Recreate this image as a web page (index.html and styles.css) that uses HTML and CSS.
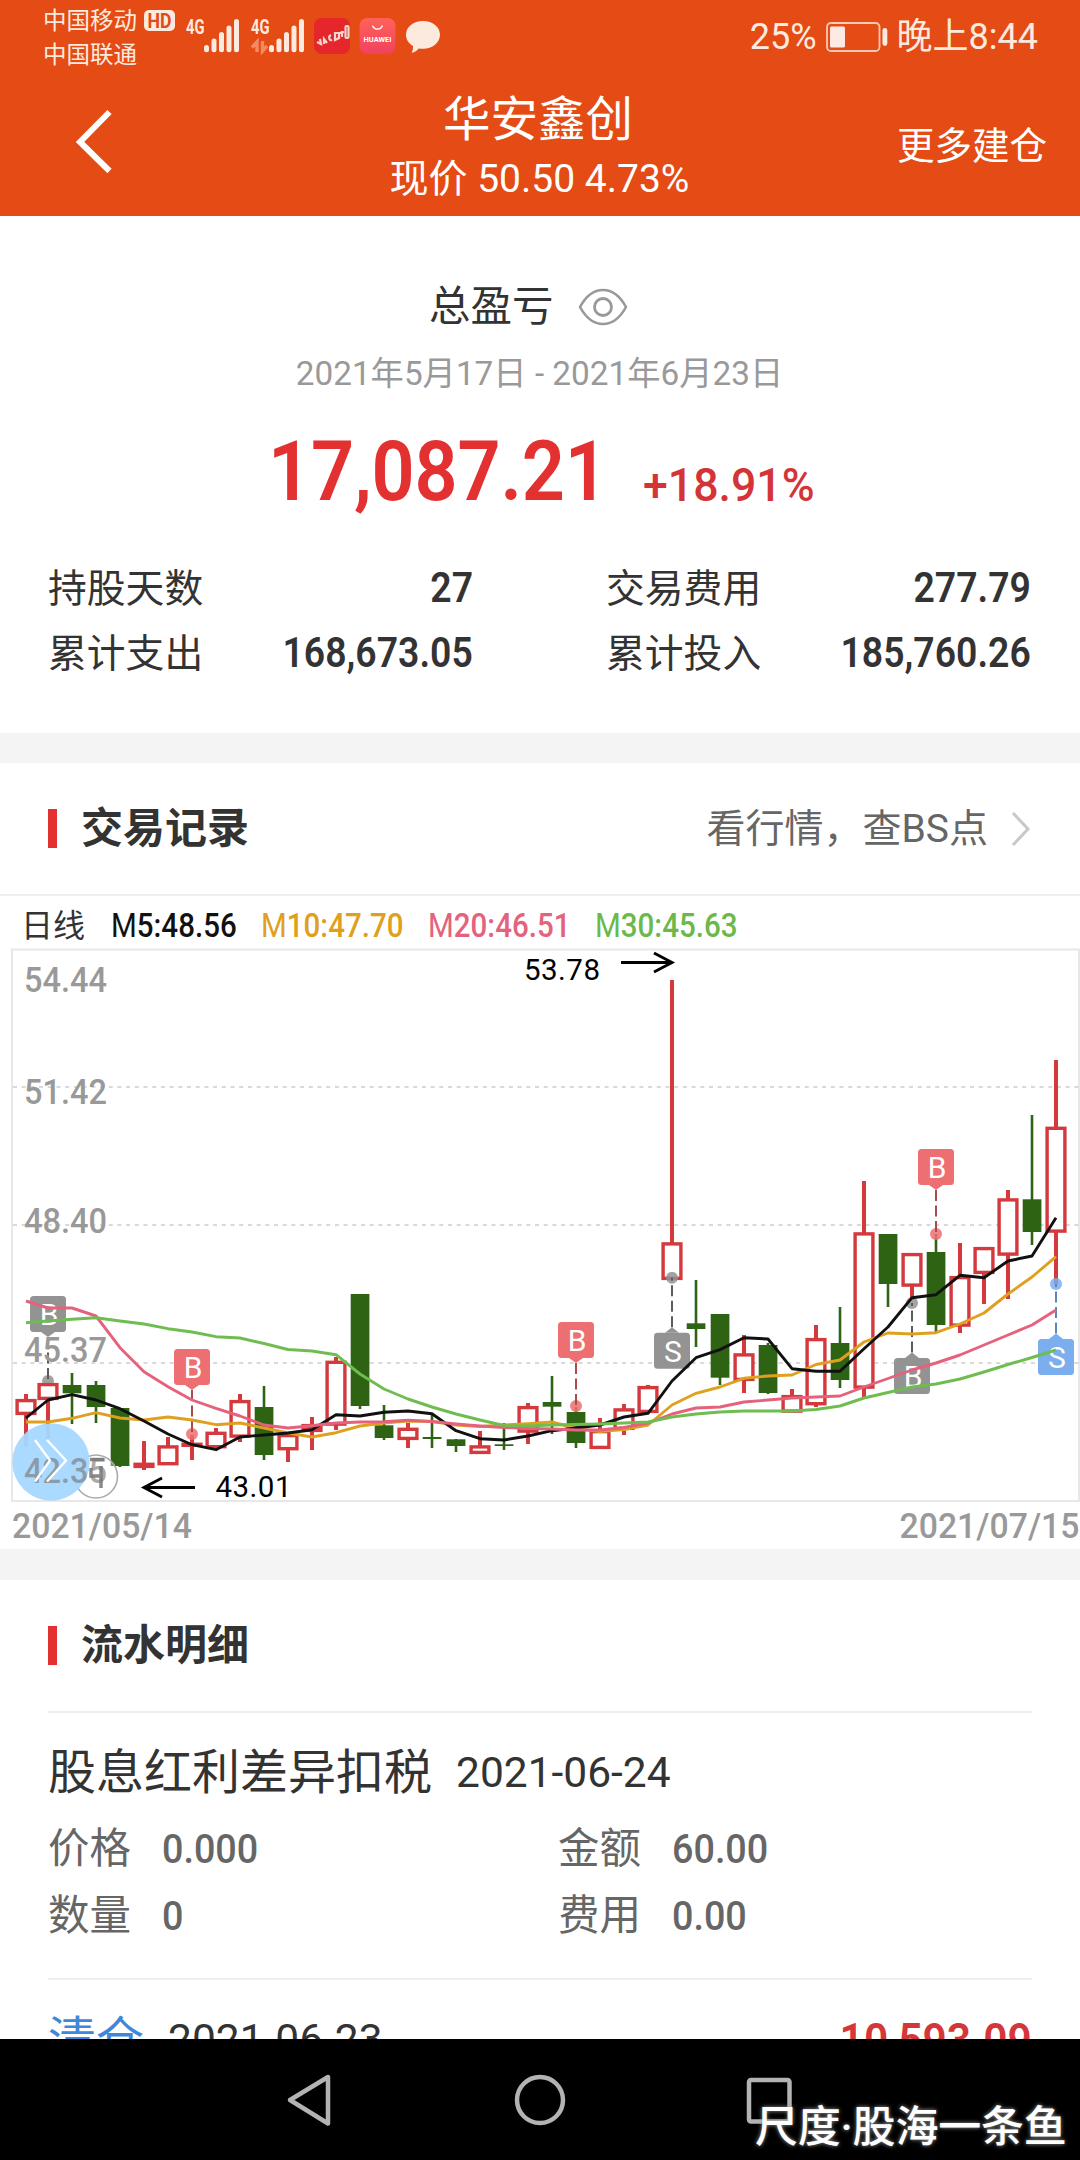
FILE: index.html
```html
<!DOCTYPE html>
<html lang="zh-CN">
<head>
<meta charset="utf-8">
<title>华安鑫创</title>
<link rel="stylesheet" href="styles.css">
</head>
<body>
<div class="screen">
  <header class="top">
    <div class="status">
      <div class="carriers"><span>中国移动</span><span>中国联通</span></div>
      <svg class="status-icons" viewBox="140 0 310 70" width="310" height="70">
        <rect x="144" y="10" width="31" height="21" rx="5" fill="#fdeadf"/>
        <text x="147.500" y="27.500" font-size="19.500" font-weight="700" fill="#e04c17" textLength="24" lengthAdjust="spacingAndGlyphs">HD</text>
        <g fill="#fdeadf">
          <text x="186" y="34" font-size="20.500" font-weight="700" textLength="18.500" lengthAdjust="spacingAndGlyphs">4G</text>
          <text x="251" y="34" font-size="20.500" font-weight="700" textLength="18.500" lengthAdjust="spacingAndGlyphs">4G</text>
        </g>
        <g stroke="#fdeadf" stroke-width="5" stroke-linecap="round">
          <path d="M206.500 47.500v2.200M214 41v8.700M221.500 34.500v15.200M229 28v21.700M236.500 21.500v28.200"/>
          <path d="M271.500 47.500v2.200M279 41v8.700M286.500 34.500v15.200M294 28v21.700M301.500 21.500v28.200"/>
        </g>
        <path d="M257 52V42l-5 5.500M262.500 41v10l4.500-5" fill="none" stroke="#f58a62" stroke-width="3.400"/>
        <rect x="314" y="18" width="36" height="36" rx="8" fill="#e5262b"/>
        <g fill="none" stroke="#f6d5cf" stroke-width="2.200">
          <path d="M317 42l4 2-1-5M324 44v-5l3 4M331 35c-3 1-2 6 1 5M335 33v7l4-2v-5zM342 31v6M340 33l4-1"/>
          <rect x="345.500" y="26" width="3" height="12" rx="1"/>
        </g>
        <defs><linearGradient id="hw" x1="0" y1="0" x2="0" y2="1"><stop offset="0" stop-color="#ff6259"/><stop offset="1" stop-color="#f1415f"/></linearGradient></defs>
        <rect x="359.500" y="18" width="36" height="36" rx="8" fill="url(#hw)"/>
        <path d="M372.500 25.500a5.300 5.300 0 0 0 10 0" fill="none" stroke="#fff" stroke-width="1.300"/>
        <text x="363.500" y="41.500" font-size="6.800" font-weight="700" fill="#fff" textLength="28" lengthAdjust="spacingAndGlyphs">HUAWEI</text>
        <path d="M423 21c9.600 0 17 6 17 13.800s-7.400 14-17 14c-1.500 0-3-.1-4.300-.4-1.700 2-4 3.800-7 4.300 1-2 1.500-4.200 1.300-6.600-4.400-2.600-7-6.700-7-11.300C406 27 413.400 21 423 21z" fill="#fdeadf"/>
      </svg>
      <div class="battery">
        <span>25%</span>
        <svg viewBox="0 0 62 30" width="62" height="30"><rect x="1" y="1" width="52.500" height="28" rx="4" fill="none" stroke="#fbc9b2" stroke-width="1.800"/><rect x="4" y="4.500" width="15" height="21" rx="1.500" fill="#fdeae4"/><rect x="56.500" y="6" width="4.800" height="18" rx="2.400" fill="#fdeae4"/></svg>
        <span>晚上8:44</span>
      </div>
    </div>
    <div class="navbar">
      <svg class="back" viewBox="0 0 40 66" width="40" height="66"><path d="M34.500 3L5 33l29.500 29" fill="none" stroke="#fff" stroke-width="6"/></svg>
      <div class="heading"><h1>华安鑫创</h1><p>现价 50.50 4.73%</p></div>
      <a class="more">更多建仓</a>
    </div>
  </header>

  <section class="summary">
    <div class="sum-title"><span>总盈亏</span>
      <svg viewBox="0 0 50 38" width="50" height="38"><path d="M2 19C8 8 16 2 25 2s17 6 23 17c-6 11-14 17-23 17S8 30 2 19z" fill="none" stroke="#999" stroke-width="2.600" stroke-linejoin="round"/><circle cx="25" cy="19" r="8.500" fill="none" stroke="#999" stroke-width="2.800"/></svg>
    </div>
    <div class="period">2021年5月17日 - 2021年6月23日</div>
    <div class="profit"><span class="amount">17,087.21</span><span class="rate">+18.91%</span></div>
    <div class="stats">
      <div class="stat"><span>持股天数</span><b>27</b></div>
      <div class="stat"><span>交易费用</span><b>277.79</b></div>
      <div class="stat"><span>累计支出</span><b>168,673.05</b></div>
      <div class="stat"><span>累计投入</span><b>185,760.26</b></div>
    </div>
  </section>

  <section class="trades">
    <div class="section-head">
      <h2><span>交易记录</span></h2>
      <a><span>看行情，查BS点</span><svg viewBox="0 0 20 36" width="20" height="36"><path d="M2 2l15 16L2 34" fill="none" stroke="#c8c8c8" stroke-width="3"/></svg></a>
    </div>
    <div class="legend">
      <span class="day">日线</span>
      <span class="ma m5"><i>M</i>5:48.56</span>
      <span class="ma m10"><i>M</i>10:47.70</span>
      <span class="ma m20"><i>M</i>20:46.51</span>
      <span class="ma m30"><i>M</i>30:45.63</span>
    </div>
    <svg id="chart" class="chart" viewBox="0 948 1080 555" width="1080" height="555"></svg>
    <div class="dates"><span>2021/05/14</span><span>2021/07/15</span></div>
  </section>

  <section class="flow">
    <div class="section-head"><h2><span>流水明细</span></h2></div>
    <article class="entry">
      <div class="entry-title"><span>股息红利差异扣税</span><time>2021-06-24</time></div>
      <div class="fields">
        <div><span>价格</span><b>0.000</b></div>
        <div><span>金额</span><b>60.00</b></div>
        <div><span>数量</span><b>0</b></div>
        <div><span>费用</span><b>0.00</b></div>
      </div>
    </article>
    <article class="entry">
      <div class="entry-title"><span class="clear">清仓</span><time>2021-06-23</time><b class="gain">10,593.09</b></div>
    </article>
  </section>

  <footer class="keys">
    <svg viewBox="0 0 1080 121" width="1080" height="121"><g fill="none" stroke="#b3b3b3" stroke-width="4.500" stroke-linejoin="round"><path d="M328 38v46.500L290 61z"/><circle cx="540" cy="61" r="23"/><rect x="749" y="41" width="40.500" height="41.500" rx="2"/></g></svg>
    <span class="watermark">尺度·股海一条鱼</span>
  </footer>
</div>
<script src="chart.js"></script>
</body>
</html>
```
FILE: styles.css
```css
* { box-sizing: border-box; }
body {
  margin: 0;
  background: #fff;
  color: #333;
  font-family: Roboto, "Noto Sans CJK SC", sans-serif;
}
h1, h2, p { margin: 0; font-weight: 400; }
i { font-style: normal; }
svg { display: block; flex: none; }
.screen {
  width: 1080px;
  height: 2160px;
  display: flex;
  flex-direction: column;
  overflow: hidden;
  white-space: nowrap;
}

.top { flex: none; height: 216px; background: #e44b15; color: #fff; }
.status { height: 74px; display: flex; align-items: flex-start; color: #fdeadf; padding-left: 43px; }
.carriers { width: 97px; padding-top: 4px; display: flex; flex-direction: column; font-size: 23.5px; line-height: 34px; }
.battery { margin-left: auto; padding: 16px 42px 0 0; display: flex; align-items: center; gap: 9px; font-size: 36px; line-height: 42px; }
.navbar { height: 142px; display: grid; grid-template-columns: 300px 480px 300px; }
.back { margin: 35px 0 0 75px; }
.heading { text-align: center; padding-top: 15px; }
.heading h1 { font-size: 47.5px; line-height: 62px; padding-right: 4px; }
.heading p { font-size: 39px; line-height: 56px; padding-right: 1px; }
.more { font-size: 37.5px; line-height: 144px; padding-left: 117px; }

.summary { flex: none; height: 517px; padding-top: 64px; background: #fff; }
.sum-title { height: 54px; display: flex; align-items: center; padding-left: 429px; gap: 24px; font-size: 41.5px; line-height: 50px; }
.sum-title span { margin-top: -1px; }
.period { height: 76px; line-height: 79px; font-size: 33.3px; color: #999; text-align: center; padding-right: 1px; }
.profit { height: 122px; display: flex; color: #e33031; font-weight: 600; padding-left: 268px; }
.amount { width: 375px; font-size: 83px; line-height: 124px; letter-spacing: -.2px; transform: scaleX(.91); transform-origin: left; }
.rate { font-size: 47px; line-height: 149px; font-weight: 500; color: #d43437; transform: scaleX(.95); transform-origin: left; }
.stats { display: grid; grid-template-columns: 425px 425px; column-gap: 133px; padding-left: 48px; margin-top: 24px; }
.stat { height: 65px; display: flex; justify-content: space-between; align-items: center; font-size: 38.8px; line-height: 50px; }
.stat b { font-size: 42px; font-weight: 600; transform: scaleX(.89); transform-origin: right; margin-top: -1px; }

.trades { flex: none; height: 816px; border-top: 30px solid #f4f4f4; }
.section-head { height: 133px; display: flex; align-items: center; justify-content: space-between; padding: 0 49px 0 48px; border-bottom: 2px solid #eee; line-height: 50px; }
.section-head h2 { display: flex; align-items: center; gap: 24px; font-size: 42px; font-weight: 700; }
.section-head h2::before { content: ""; width: 9px; height: 39px; background: #e33031; }
.section-head a { display: flex; align-items: center; gap: 23px; font-size: 39px; color: #666; }
.legend { height: 52px; display: grid; grid-template-columns: 90px 150px 167px 167px auto; padding: 5px 0 0 21px; line-height: 50px; align-items: center; }
.legend span { line-height: 50px; }
.day { font-size: 32px; }
.ma { font-size: 33px; font-weight: 500; transform: scaleX(.895); transform-origin: left; }
.ma i { font-weight: 400; }
.m5 { color: #111; }
.m10 { color: #dfa020; }
.m20 { color: #e5627c; }
.m30 { color: #6ab94a; }
.dates { height: 46px; display: flex; justify-content: space-between; font-size: 35px; line-height: 48px; color: #999; padding: 0 1px 0 12px; }
.dates span { transform: scaleX(.965); transform-origin: left; font-weight: 500; }
.dates span:last-child { transform-origin: right; }

.flow { flex: none; height: 490px; border-top: 31px solid #f4f4f4; overflow: hidden; }
.flow .section-head { border: 0; height: 131px; }
.entry { height: 267px; margin: 0 48px; border-top: 2px solid #eee; padding-top: 30px; }
.entry-title { display: flex; align-items: center; height: 60px; font-size: 48px; line-height: 56px; }
.entry-title time { font-size: 42.5px; margin-left: 24px; }
.entry-title .clear { color: #3f87d8; font-size: 48px; }
.gain { margin-left: auto; font-size: 46px; font-weight: 600; color: #d4363a; transform: scaleX(.925); transform-origin: right; }
.fields { display: grid; grid-template-columns: 510px auto; padding-top: 12px; color: #666; font-size: 41.5px; line-height: 50px; }
.fields div { display: flex; align-items: center; height: 67px; gap: 31px; }
.fields b { font-size: 41px; font-weight: 500; transform: scaleX(.92); transform-origin: left; }

.keys { flex: 1; position: relative; background: #000; }
.watermark { position: absolute; left: 755px; top: 58px; font-size: 43px; line-height: 60px; font-weight: 500; color: #fff; text-shadow: 0 0 4px #999; letter-spacing: -.2px; }
```
FILE: chart.js
```js
// [colour, body top, body bottom, wick top, wick bottom], one per trading day
const days = [
  ['r',1399,1415,1394,1447],['r',1383,1400,1383,1439],['g',1385,1393.3,1373,1424],['g',1385,1407,1381,1423],
  ['g',1408,1466,1408,1467],['r',1462.7,1468,1441,1470],['r',1445.3,1465.3,1437,1465],['r',1442.7,1446.7,1435,1460],
  ['r',1431.7,1448.3,1428,1448],['r',1400,1437.7,1394,1442],['g',1407,1455,1386,1460],['r',1434,1450.3,1434,1462],
  ['r',1424,1432,1417,1450],['r',1360.7,1425.7,1357,1430],['g',1294,1406,1294,1409],['g',1425.3,1438,1405,1440],
  ['r',1427.7,1440,1423,1448],['g',1437,1439,1415,1448],['g',1439.3,1446,1439,1452],['r',1445.3,1454,1431,1454],
  ['g',1444.3,1446,1423,1450],['r',1406,1432.7,1403,1444],['g',1402,1406.7,1376,1434],['g',1412,1443,1407,1448],
  ['r',1430,1449,1418,1449],['r',1408.3,1430,1404,1435],['r',1386,1413,1385,1413],['r',1242.3,1280,980,1280],
  ['g',1323.3,1329,1280,1347],['g',1314,1377.7,1314,1385],['r',1353.3,1381,1335,1393],['g',1345,1393,1343,1394],
  ['r',1395,1412.7,1389,1412],['r',1338,1405.3,1325,1407],['g',1343,1380,1307,1388],['r',1232.3,1388.7,1181,1397],
  ['g',1234,1284,1234,1307],['r',1253,1286.7,1253,1300],['g',1252,1325,1234,1332],['r',1276,1326.7,1243,1333],
  ['r',1247,1274,1247,1304],['r',1198.3,1255.7,1190,1299],['g',1199.3,1232,1115,1245],['r',1126.7,1232.7,1060,1284]
];
const averages = {
  '#111': [1418,1400,1394.7,1400,1408.7,1421,1434,1444.7,1449.7,1437,1435,1433,1429.7,1414.7,1416,1412.3,1411,1413.7,1430.7,1438.7,1440,1436,1430.7,1428,1425,1417,1413.3,1381,1357.7,1349.6,1337.7,1339,1368.7,1371.3,1371.3,1348.7,1327,1297.7,1294.7,1275.3,1277.7,1261,1256,1217.7],
  '#dfa020': [1422,1422,1418.3,1412.7,1418,1420,1417,1420,1424.7,1423,1428,1433,1437,1432.7,1426,1423,1421,1421.5,1425,1426.5,1425,1423.7,1422,1428.5,1431.5,1429.5,1425,1405,1393.3,1387,1378.3,1376,1375,1364.5,1360,1342,1333,1334,1332.7,1324,1313,1294,1277,1256.7],
  '#e5627c': [1301,1308,1308,1316,1347.7,1371.7,1386.7,1400,1408.3,1416,1425,1428,1425.7,1423,1422,1421.7,1420.3,1421.5,1424,1426,1427.5,1428.5,1429,1430,1430,1427.5,1423,1414,1408,1407,1402,1400,1398,1397,1396,1387,1378.5,1370,1363,1355,1345,1335,1325,1310],
  '#6fbd50': [1322.7,1321,1319.3,1317.7,1321,1324,1328.7,1332,1336.7,1338,1343.5,1349.5,1351,1354.7,1374,1389,1399,1407,1414,1420,1425.5,1426,1425,1424.5,1424,1423,1422,1417,1414,1412,1411,1411,1411,1409.5,1406,1398,1392.5,1387,1384,1379,1372,1364.5,1357.5,1350]
};
// [letter, colour, x, box top, dot y]
const marks = [
  ['B','#939393',48,1296,1381],['B','#ee6f71',192,1349,1434],['B','#ee6f71',576,1322,1406],
  ['S','#939393',672,1332.7,1277.7],['B','#ee6f71',936,1149,1234],['B','#939393',912,1358,1303],['S','#7aaeee',1056,1339,1284]
];
const xAt = i => i === 0 ? 26 : 24 + 24 * i;
const out = [];
out.push('<path d="M12 949.500H1079V1501H12z" fill="none" stroke="#e8e8e8" stroke-width="2"/>');
[1087, 1225, 1363].forEach(y => out.push(`<path d="M13 ${y}H1079" stroke="#d9d9d9" stroke-width="1.800" stroke-dasharray="4 4.700"/>`));

const dot = m => `<circle cx="${m[2]}" cy="${m[4]}" r="6" fill="${m[1]}" opacity=".85"/>`;
out.push(dot(marks[0]));
days.forEach(([c, t, b, h, l], i) => {
  const x = xAt(i);
  if (c === 'g') {
    out.push(`<path d="M${x} ${h}V${l}" stroke="#2f6314" stroke-width="2.600"/><rect x="${x - 9.3}" y="${t}" width="18.700" height="${b - t}" fill="#2f6314"/>`);
  } else {
    const inner = b - t > 8.2 ? '#fff' : '#d4393d';
    out.push(`<path d="M${x} ${h}V${l}" stroke="#d4393d" stroke-width="4"/><rect x="${x - 8.9}" y="${t + 1.6}" width="17.800" height="${Math.max(b - t - 3.2, 1)}" fill="${inner}" stroke="#d4393d" stroke-width="3.400"/>`);
  }
});
marks.forEach((m, i) => {
  const [ch, col, x, top, dy] = m;
  const above = top < dy;
  const tip = above ? top + 41 : top - 5.5;
  const base = above ? top + 36 : top;
  const dash = col === '#ee6f71' ? '#a94a4d' : col === '#7aaeee' ? '#5b86bb' : '#5c5c5c';
  if (i) out.push(dot(m));
  out.push(`<path d="M${x} ${tip}V${dy}" stroke="${dash}" stroke-width="2" stroke-dasharray="11 4.500"/>`);
  out.push(`<rect x="${x - 18}" y="${top}" width="36" height="36" rx="3.500" fill="${col}"/><path d="M${x - 7} ${base}L${x} ${tip}L${x + 7} ${base}z" fill="${col}"/>`);
  out.push(`<text x="${x + 1}" y="${top + 29}" font-size="30" fill="#fff" text-anchor="middle">${ch}</text>`);
});
[['54.44',992],['51.42',1104],['48.40',1233],['45.37',1361.7]].forEach(([s, y]) =>
  out.push(`<text x="24" y="${y}" font-size="34.500" font-weight="500" fill="#999" textLength="83" lengthAdjust="spacingAndGlyphs">${s}</text>`));
['#dfa020', '#111', '#e5627c', '#6fbd50'].forEach(c =>
  out.push(`<polyline fill="none" stroke="${c}" stroke-width="2.900" stroke-linejoin="round" points="${averages[c].map((y, i) => xAt(i) + ',' + y).join(' ')}"/>`));

out.push('<g font-size="29.500" fill="#000"><text x="524" y="979.500" textLength="76">53.78</text><text x="215.500" y="1496.700" textLength="76">43.01</text></g>');
out.push('<path d="M621 962.500H671M654 953l18 9.500-18 9.500M195 1487.500H145M162 1478l-18 9.500 18 9.500" fill="none" stroke="#000" stroke-width="2.900"/>');
// floating expand and info buttons
out.push('<circle cx="96" cy="1476.500" r="21.500" fill="#fff" fill-opacity=".35" stroke="#aaa" stroke-width="1.600"/><path d="M90 1459.500h14M101 1466v22M91 1468v8h10" fill="none" stroke="#8a8a8a" stroke-width="3.500"/>');
out.push('<circle cx="51" cy="1462" r="38.700" fill="#a5d8ff" fill-opacity=".95"/>');
out.push('<text x="24" y="1483" font-size="34.500" font-weight="500" fill="#777" fill-opacity=".65" textLength="83" lengthAdjust="spacingAndGlyphs">42.35</text>');
out.push('<path d="M35 1440l15 20.500-15 21M47 1440l19 20.500-19 21" fill="none" stroke="#fff" stroke-width="2.400"/>');
document.getElementById('chart').innerHTML = out.join('');
```
